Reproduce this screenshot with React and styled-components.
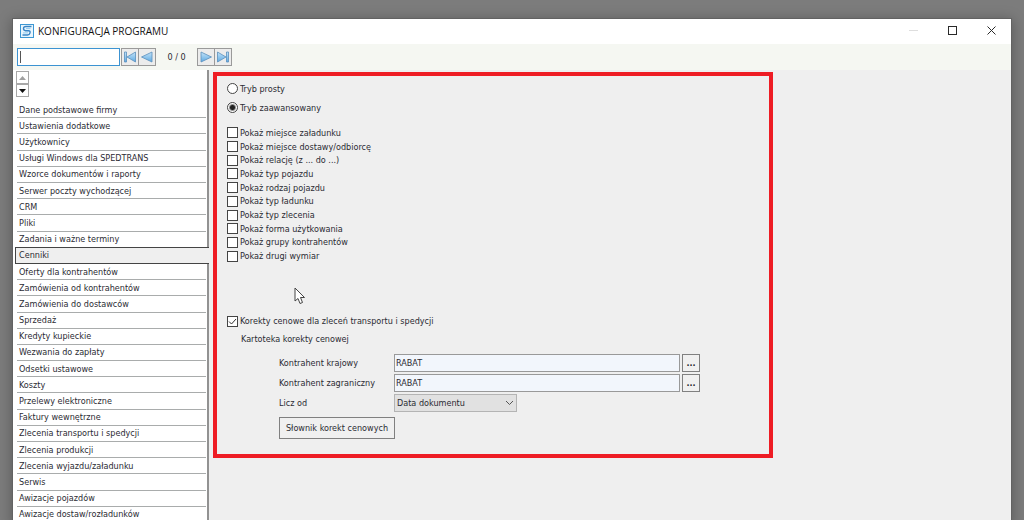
import React, { useState } from "react";
import styled, { createGlobalStyle } from "styled-components";

const GlobalStyle = createGlobalStyle`
  * {
    box-sizing: border-box;
  }
  body {
    margin: 0;
    overflow: hidden;
    background: #7c7c7c;
  }
  body, button, input, select {
    font-family: "DejaVu Sans Condensed", "DejaVu Sans", Tahoma, sans-serif;
    font-size: 9px;
    color: #2b2b33;
  }
`;

const Desktop = styled.div`
  height: 100vh;
  padding: 19px 13px 0;
  overflow: hidden;
`;

const Window = styled.main`
  display: flex;
  flex-direction: column;
  height: calc(100vh - 16px);
  background: #efefef;
  box-shadow: 0 0 0 1px #626262, 0 2px 12px 2px rgba(0, 0, 0, 0.25);
`;

const TitleBar = styled.header`
  display: flex;
  align-items: center;
  flex: none;
  height: 25px;
  padding: 0 0 2px 7px;
  background: #fff;
`;

const Title = styled.h1`
  flex: 1;
  margin: 0 0 0 4px;
  font: 10px "Open Sans", "Noto Sans", sans-serif;
  color: #111;
`;

const WindowButton = styled.button`
  display: flex;
  align-items: center;
  justify-content: center;
  width: 39px;
  height: 23px;
  padding: 0;
  border: 0;
  background: none;
  color: ${({ disabled }) => (disabled ? "#dedede" : "#2a2a2a")};
`;

const Toolbar = styled.div`
  display: flex;
  align-items: center;
  flex: none;
  height: 26px;
  padding: 0 4px;
  background: #f5f7f2;
`;

const SearchBox = styled.div`
  position: relative;
  width: 103px;
  height: 18px;
  margin-right: 1px;
`;

const SearchInput = styled.input`
  display: block;
  width: 100%;
  height: 100%;
  padding: 0 3px;
  border: 1px solid #3c93d2;
  background: #fff;
  outline: none;
`;

const Caret = styled.span`
  position: absolute;
  top: 3px;
  left: 3px;
  width: 1px;
  height: 12px;
  background: #555;
`;

const NavButton = styled.button`
  display: flex;
  align-items: center;
  justify-content: center;
  width: 18px;
  height: 18px;
  padding: 0;
  border: 1px solid #9a9a9a;
  background: #ececec;

  & + & {
    margin-left: -1px;
  }
`;

const Counter = styled.span`
  width: 41px;
  text-align: center;
`;

const Body = styled.div`
  display: flex;
  flex: 1;
  min-height: 0;
`;

const Sidebar = styled.nav`
  display: flex;
  flex-direction: column;
  flex: none;
  width: 196px;
  background: linear-gradient(to left, #929292 2px, #fff 2px);
`;

const Scrollers = styled.div`
  display: flex;
  flex-direction: column;
  flex: none;
  height: 32px;
  padding: 1px 3px;
`;

const ScrollButton = styled.button`
  display: flex;
  align-items: center;
  justify-content: center;
  width: 13px;
  height: 13px;
  padding: 0;
  border: 1px solid #a8a8a8;
  background: #fff;
  color: ${({ disabled }) => (disabled ? "#a0a0a0" : "#111")};
`;

const Menu = styled.ul`
  display: grid;
  grid-auto-rows: minmax(16px, 1fr);
  flex: 1;
  margin: 0;
  padding: 0;
  list-style: none;
`;

const MenuItem = styled.li`
  display: flex;
  padding: ${({ $active }) => ($active ? "0 0 0 2px" : "0 3px 0 4px")};
`;

const MenuLink = styled.a`
  display: flex;
  align-items: center;
  flex: 1;
  padding-left: ${({ $active }) => ($active ? "3px" : "2px")};
  border-bottom: 1px solid #a9acac;
  color: inherit;
  text-decoration: none;
  white-space: nowrap;
  ${({ $active }) =>
    $active &&
    `
      margin-top: -1px;
      border: 1px solid #444;
      border-right: 0;
      background: #efefef;
    `}
`;

const Content = styled.section`
  flex: 1;
  padding: 2px 4px;
`;

const Panel = styled.form`
  position: relative;
  max-width: 560px;
  padding: 3px 10px 15px;
  border: 4px solid #ee1c24;
`;

const Choice = styled.label`
  display: flex;
  align-items: center;
  gap: 2px;
  height: ${({ $height }) => $height || "auto"};
`;

const Radio = styled.input`
  appearance: none;
  width: 11px;
  height: 11px;
  margin: 0;
  border: 1px solid #444;
  border-radius: 50%;
  background: #fff;

  &:checked {
    background: radial-gradient(circle, #222 2px, #fff 4px);
  }
`;

const Checkbox = styled.input`
  appearance: none;
  width: 11px;
  height: 11px;
  margin: 0;
  border: 1px solid #444;
  background: #fff;
`;

const CheckHolder = styled.span`
  position: relative;
  display: flex;

  svg {
    position: absolute;
    inset: 0;
    pointer-events: none;
  }
`;

const Options = styled.div`
  display: grid;
  grid-auto-rows: 1fr;
  height: 137px;
  margin: 9px 0 51px;
`;

const GroupTitle = styled.div`
  display: flex;
  align-items: center;
  height: 16px;
  margin: 3px 0 7px 14px;
`;

const Fields = styled.div`
  display: grid;
  grid-template-columns: 115px 1fr;
  grid-auto-rows: 18px;
  row-gap: 2px;
  align-items: center;
  margin: 0 59px 0 52px;
`;

const Lookup = styled.div`
  display: flex;
  gap: 2px;
`;

const LookupInput = styled.input`
  flex: 1;
  min-width: 0;
  height: 18px;
  padding: 0 1px;
  border: 1px solid #999;
  border-radius: 0;
  background: #f2f6fc;
`;

const LookupButton = styled.button`
  width: 18px;
  height: 18px;
  padding: 0;
  border: 1px solid #808080;
  background: #f0f0f0;
  font-weight: bold;
`;

const SelectBox = styled.div`
  position: relative;
  width: 123px;

  svg {
    position: absolute;
    top: 6px;
    right: 3px;
    pointer-events: none;
  }
`;

const Select = styled.select`
  appearance: none;
  display: block;
  width: 100%;
  height: 18px;
  padding: 0 2px;
  border: 1px solid #b4b4b4;
  border-radius: 0;
  background: #e1e1e1;
`;

const DictionaryButton = styled.button`
  display: block;
  width: 116px;
  height: 22px;
  margin: 5px 0 0 52px;
  padding: 0;
  border: 1px solid #808080;
  background: #f0f0f0;
`;

const Cursor = styled.svg`
  position: absolute;
  top: 211px;
  left: 77px;
`;

const menuItems = [
  "Dane podstawowe firmy",
  "Ustawienia dodatkowe",
  "Użytkownicy",
  "Usługi Windows dla SPEDTRANS",
  "Wzorce dokumentów i raporty",
  "Serwer poczty wychodzącej",
  "CRM",
  "Pliki",
  "Zadania i ważne terminy",
  "Cenniki",
  "Oferty dla kontrahentów",
  "Zamówienia od kontrahentów",
  "Zamówienia do dostawców",
  "Sprzedaż",
  "Kredyty kupieckie",
  "Wezwania do zapłaty",
  "Odsetki ustawowe",
  "Koszty",
  "Przelewy elektroniczne",
  "Faktury wewnętrzne",
  "Zlecenia transportu i spedycji",
  "Zlecenia produkcji",
  "Zlecenia wyjazdu/załadunku",
  "Serwis",
  "Awizacje pojazdów",
  "Awizacje dostaw/rozładunków",
];

const options = [
  "Pokaż miejsce załadunku",
  "Pokaż miejsce dostawy/odbiorcę",
  "Pokaż relację (z ... do ...)",
  "Pokaż typ pojazdu",
  "Pokaż rodzaj pojazdu",
  "Pokaż typ ładunku",
  "Pokaż typ zlecenia",
  "Pokaż forma użytkowania",
  "Pokaż grupy kontrahentów",
  "Pokaż drugi wymiar",
];

const Logo = () => (
  <svg width="14" height="14" viewBox="0 0 14 14" fill="none">
    <rect x="0.5" y="0.5" width="13" height="13" fill="#e9f5fd" stroke="#3d97d3" />
    <path
      d="M11.500 2.500H6Q3.500 2.500 3.500 4.500T5.500 6.700H8.500Q10.500 6.700 10 8.800T7.500 11H2.500"
      stroke="#3b86c6"
      strokeWidth="1.400"
    />
    <path d="M10.500 4.600H6M8 8.900H3" stroke="#7cc0ea" strokeWidth="0.8" />
  </svg>
);

// Blue arrow used by the record navigator, optionally with a stop bar
const NavArrow = ({ flip, bar }) => (
  <svg width="14" height="14" viewBox="0 0 14 14">
    <defs>
      <linearGradient id="navFill" x1="0" y1="0" x2="0" y2="1">
        <stop offset="0" stopColor="#c4e3f8" />
        <stop offset="1" stopColor="#5faae2" />
      </linearGradient>
    </defs>
    <g
      transform={flip ? "translate(14 0) scale(-1 1)" : undefined}
      fill="url(#navFill)"
      stroke="#5b8fbd"
      strokeWidth="0.8"
      strokeLinejoin="round"
    >
      <path d={bar ? "M1.500 2V12L10 7Z" : "M2 2V12L12.500 7Z"} />
      {bar && <rect x="10.500" y="2" width="2" height="10" />}
    </g>
  </svg>
);

const LookupField = ({ id, label }) => (
  <>
    <label htmlFor={id}>{label}</label>
    <Lookup>
      <LookupInput id={id} defaultValue="RABAT" />
      <LookupButton type="button" aria-label={`${label} – wybierz`}>
        ...
      </LookupButton>
    </Lookup>
  </>
);

const CheckOption = ({ label, height, defaultChecked = false }) => {
  const [checked, setChecked] = useState(defaultChecked);
  return (
    <Choice $height={height}>
      <CheckHolder>
        <Checkbox
          type="checkbox"
          checked={checked}
          onChange={(e) => setChecked(e.target.checked)}
        />
        {checked && (
          <svg width="11" height="11" viewBox="0 0 11 11" fill="none" stroke="#333">
            <path d="M2 5.500L4.500 8L9 3" />
          </svg>
        )}
      </CheckHolder>
      {label}
    </Choice>
  );
};

const App = () => (
  <>
    <GlobalStyle />
    <Desktop>
      <Window>
        <TitleBar>
          <Logo />
          <Title>KONFIGURACJA PROGRAMU</Title>
          <WindowButton disabled aria-label="Minimalizuj">
            <svg width="9" height="9" stroke="currentColor">
              <path d="M0 4.500H9" />
            </svg>
          </WindowButton>
          <WindowButton aria-label="Maksymalizuj">
            <svg width="9" height="9" fill="none" stroke="currentColor">
              <rect x="0.5" y="0.5" width="8" height="8" />
            </svg>
          </WindowButton>
          <WindowButton aria-label="Zamknij">
            <svg width="9" height="9" stroke="currentColor">
              <path d="M0.500 0.500L8.500 8.500M8.500 0.500L0.500 8.500" />
            </svg>
          </WindowButton>
        </TitleBar>
        <Toolbar>
          <SearchBox>
            <SearchInput type="text" aria-label="Szukaj" />
            <Caret />
          </SearchBox>
          <NavButton aria-label="Pierwszy">
            <NavArrow flip bar />
          </NavButton>
          <NavButton aria-label="Poprzedni">
            <NavArrow flip />
          </NavButton>
          <Counter>0 / 0</Counter>
          <NavButton aria-label="Następny">
            <NavArrow />
          </NavButton>
          <NavButton aria-label="Ostatni">
            <NavArrow bar />
          </NavButton>
        </Toolbar>
        <Body>
          <Sidebar>
            <Scrollers>
              <ScrollButton disabled aria-label="W górę">
                <svg width="7" height="4" fill="currentColor">
                  <path d="M0 4L3.500 0L7 4Z" />
                </svg>
              </ScrollButton>
              <ScrollButton aria-label="W dół">
                <svg width="7" height="4" fill="currentColor">
                  <path d="M0 0H7L3.500 4Z" />
                </svg>
              </ScrollButton>
            </Scrollers>
            <Menu>
              {menuItems.map((item) => (
                <MenuItem key={item} $active={item === "Cenniki"}>
                  <MenuLink href="#" $active={item === "Cenniki"}>
                    {item}
                  </MenuLink>
                </MenuItem>
              ))}
            </Menu>
          </Sidebar>
          <Content>
            <Panel>
              <Choice $height="19px">
                <Radio type="radio" name="mode" />
                Tryb prosty
              </Choice>
              <Choice $height="19px">
                <Radio type="radio" name="mode" defaultChecked />
                Tryb zaawansowany
              </Choice>
              <Options>
                {options.map((option) => (
                  <CheckOption key={option} label={option} />
                ))}
              </Options>
              <CheckOption
                label="Korekty cenowe dla zleceń transportu i spedycji"
                height="14px"
                defaultChecked
              />
              <GroupTitle>Kartoteka korekty cenowej</GroupTitle>
              <Fields>
                <LookupField id="domestic" label="Kontrahent krajowy" />
                <LookupField id="foreign" label="Kontrahent zagraniczny" />
                <label htmlFor="countFrom">Licz od</label>
                <SelectBox>
                  <Select id="countFrom">
                    <option>Data dokumentu</option>
                  </Select>
                  <svg width="9" height="6" fill="none" stroke="#555">
                    <path d="M1 1L4.500 4.500L8 1" />
                  </svg>
                </SelectBox>
              </Fields>
              <DictionaryButton type="button">Słownik korekt cenowych</DictionaryButton>
              <Cursor width="12" height="18" viewBox="0 0 12 18">
                <path
                  d="M1 1V14L4 11.500L6 16.500L8.500 15.500L6.500 10.500H10.500Z"
                  fill="#fff"
                  stroke="#444"
                />
              </Cursor>
            </Panel>
          </Content>
        </Body>
      </Window>
    </Desktop>
  </>
);

export default App;
